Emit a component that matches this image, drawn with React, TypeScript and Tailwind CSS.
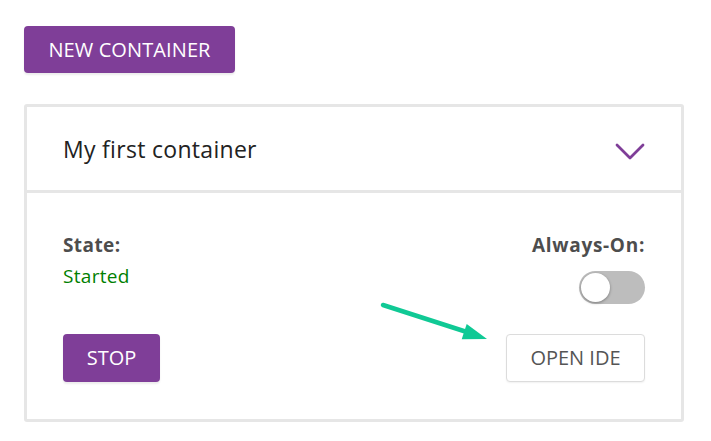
export default function App() {
  return (
    <div className="min-h-[441px] w-[711px] bg-white pl-6 pt-[26px] font-['Open_Sans',sans-serif]">
      <button className="h-[47px] w-[211px] rounded-[4px] bg-[#7f3e98] text-[20px] tracking-[0.1px] text-white shadow-[0_2px_2px_rgba(0,0,0,0.08)]">
        NEW CONTAINER
      </button>

      <div className="relative mt-[31px] w-[660px] rounded-[3px] border-[3px] border-[#e6e6e6]">
        <div className="flex h-[86px] items-center justify-between border-b-[3px] border-[#e6e6e6] pl-[36px] pr-[36px]">
          <h2 className="mt-[2px] text-[23px] tracking-[0.3px] text-[#222]">My first container</h2>
          <svg width="30" height="20" viewBox="0 0 30 20" className="mt-[6px]">
            <polyline points="2,3 15,16 28,3" fill="none" stroke="#7f3e98" strokeWidth="2.8" strokeLinecap="round" strokeLinejoin="round" />
          </svg>
        </div>

        <div className="px-[36px] pb-[37px] pt-[40px]">
          <div className="flex items-start justify-between">
            <div>
              <div className="text-[19px] font-bold leading-[24px] tracking-[0.4px] text-[#4d4d4d]">State:</div>
              <div className="mt-[7px] text-[19px] leading-[24px] tracking-[0.3px] text-[#008000]">Started</div>
            </div>
            <div className="flex flex-col items-end">
              <div className="text-[19px] font-bold leading-[24px] tracking-[0.7px] text-[#4d4d4d]">Always-On:</div>
              <div className="mt-[14px] flex h-[33px] w-[66px] items-center rounded-full bg-[#bdbdbd] pl-[2px]">
                <div className="h-[29px] w-[29px] rounded-full bg-white shadow-[0_1px_3px_rgba(0,0,0,0.35)]" />
              </div>
            </div>
          </div>

          <div className="mt-[30px] flex items-center justify-between">
            <button className="h-[48px] w-[97px] rounded-[4px] bg-[#7f3e98] text-[20px] text-white shadow-[0_2px_2px_rgba(0,0,0,0.08)]">
              STOP
            </button>
            <button className="h-[48px] w-[139px] rounded-[4px] border border-[#dcdcdc] bg-white text-[20px] text-[#555] shadow-[0_1px_2px_rgba(0,0,0,0.06)]">
              OPEN IDE
            </button>
          </div>
        </div>

        <svg className="pointer-events-none absolute left-[350px] top-[190px]" width="120" height="50" viewBox="0 0 120 50">
          <line x1="6" y1="8" x2="96" y2="37" stroke="#10c995" strokeWidth="4.5" strokeLinecap="round" />
          <polygon points="89.7,27 110,42 84.7,42.2" fill="#10c995" />
        </svg>
      </div>
    </div>
  );
}
